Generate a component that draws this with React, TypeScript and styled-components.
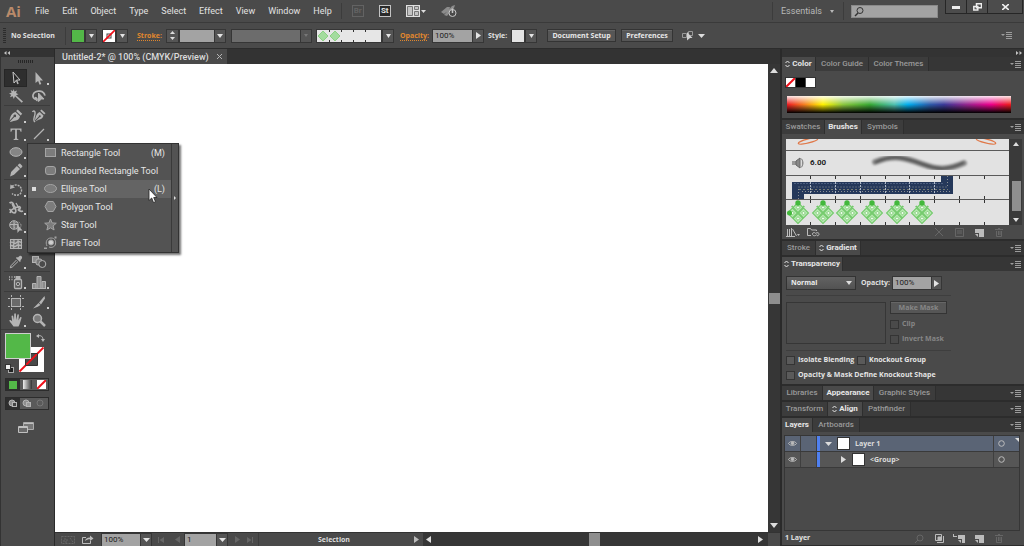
import React from "react";
import styled, { createGlobalStyle, css } from "styled-components";

const GlobalStyle = createGlobalStyle`
  *, *::before, *::after { box-sizing: border-box; }
  body { margin: 0; background: #2f2f2f; }
  body, button, input, select {
    font-family: Roboto, "Open Sans", sans-serif;
    font-size: 8px;
    line-height: 10px;
    color: #dcdcdc;
  }
  button, input, select { margin: 0; padding: 0; border: 0; border-radius: 0; background: none; }
  svg { display: block; flex: none; }
`;

const Shell = styled.div`
  min-height: 100vh;
  display: flex;
  flex-direction: column;
  background: #4a4a4a;
`;

const labelFont = css`
  font-family: "Open Sans", sans-serif;
  font-size: 7px;
  font-weight: 700;
`;

/* ---------- shared controls ---------- */

const Rule = styled.span<{ $h: number; $l?: number; $r?: number }>`
  width: 1px;
  height: ${(p) => p.$h}px;
  margin-left: ${(p) => p.$l ?? 0}px;
  margin-right: ${(p) => p.$r ?? 0}px;
  background: #3c3c3c;
  flex: none;
`;

const Spacer = styled.span`
  flex: 1;
`;

const IconButton = styled.button<{ $w?: number; $dim?: boolean }>`
  width: ${(p) => p.$w ?? 14}px;
  height: 14px;
  display: flex;
  align-items: center;
  justify-content: center;
  flex: none;
  color: ${(p) => (p.$dim ? "#666" : "#bcbcbc")};
`;

const ArrowButton = styled.button<{ $w?: number; $off?: boolean }>`
  width: ${(p) => p.$w ?? 12}px;
  align-self: stretch;
  display: flex;
  align-items: center;
  justify-content: center;
  flex: none;
  background: #555;
  border: 1px solid #363636;
  color: ${(p) => (p.$off ? "#777" : "#e4e4e4")};
`;

const Down = ({ w = 7, h = 4 }: { w?: number; h?: number }) => (
  <svg width={w} height={h} viewBox="0 0 7 4" preserveAspectRatio="none" fill="currentColor">
    <path d="M0 0h7L3.500 4z" />
  </svg>
);
const Right = () => (
  <svg width="5" height="7" viewBox="0 0 5 7" fill="currentColor">
    <path d="M0 0v7l5-3.500z" />
  </svg>
);
const Left = () => (
  <svg width="5" height="7" viewBox="0 0 5 7" fill="currentColor">
    <path d="M5 0v7L0 3.500z" />
  </svg>
);
const Updown = () => (
  <svg width="5" height="8" viewBox="0 0 5 8" fill="none" stroke="currentColor" strokeWidth="1">
    <path d="M.5 3 2.500 1l2 2M.5 5l2 2 2-2" />
  </svg>
);
const PanelMenuIcon = () => (
  <svg width="11" height="7" viewBox="0 0 11 7" fill="#9c9c9c">
    <path d="M0 2h4L2 4zM5 0h6v1H5zM5 2h6v1H5zM5 4h6v1H5zM5 6h6v1H5z" />
  </svg>
);
const NoneMark = ({ w, h }: { w: number; h: number }) => (
  <svg width={w} height={h} viewBox={`0 0 ${w} ${h}`}>
    <rect width={w} height={h} fill="#fff" />
    <path d={`M0 ${h}L${w} 0`} stroke="#f0101a" strokeWidth="2" />
  </svg>
);

/* ---------- menu bar ---------- */

const MenuBar = styled.header`
  height: 23px;
  display: flex;
  align-items: center;
  border-bottom: 1px solid #3a3a3a;
  background: #4a4a4a;
`;

const Logo = styled.span`
  width: 28px;
  padding-left: 6px;
  font: 700 15px/20px "Open Sans", sans-serif;
  color: #b98a6a;
`;

const Menus = styled.nav`
  display: flex;
  gap: 13px;
  margin-left: 7px;
`;

const MenuItem = styled.button`
  font-size: 9px;
  line-height: 14px;
  color: #e2e2e2;
`;

const AppBarIcons = styled.div`
  display: flex;
  align-items: center;
`;

const BoxedIcon = styled.button<{ $dim?: boolean; $l: number }>`
  width: 12px;
  height: 12px;
  margin-left: ${(p) => p.$l}px;
  font-size: 8px;
  font-weight: 700;
  border: 1px solid ${(p) => (p.$dim ? "#636363" : "#c4c4c4")};
  color: ${(p) => (p.$dim ? "#636363" : "#e4e4e4")};
  background: ${(p) => (p.$dim ? "none" : "#2a2a2a")};
`;

const Workspace = styled.button`
  display: flex;
  align-items: center;
  gap: 8px;
  font-size: 9px;
  line-height: 14px;
  color: #b8b8b8;
`;

const SearchBox = styled.label`
  width: 87px;
  height: 13px;
  display: flex;
  align-items: center;
  padding-left: 2px;
  background: #a3a3a3;
  border: 1px solid #8a8a8a;
`;

const SearchInput = styled.input`
  min-width: 0;
  flex: 1;
`;

const WindowButtons = styled.div`
  align-self: flex-start;
  display: flex;
  margin: 0 1px 0 7px;
  border: 1px solid #262626;
  border-top: 0;
`;

const WindowButton = styled.button<{ $w: number }>`
  width: ${(p) => p.$w}px;
  height: 13px;
  display: flex;
  align-items: center;
  justify-content: center;
  background: #4c4c4c;
  & + & { border-left: 1px solid #262626; }
`;

/* ---------- control bar ---------- */

const ControlBar = styled.section`
  height: 26px;
  display: flex;
  align-items: center;
  padding: 0 12px 0 3px;
  border-bottom: 1px solid #2c2c2c;
  background: #4a4a4a;
`;

const Grip = styled.span`
  width: 3px;
  height: 16px;
  background: repeating-linear-gradient(#2c2c2c 0 1px, transparent 1px 2px);
`;

const ControlText = styled.span<{ $w: number; $l?: number }>`
  ${labelFont}
  width: ${(p) => p.$w}px;
  margin-left: ${(p) => p.$l ?? 0}px;
  white-space: nowrap;
  color: #e0e0e0;
  flex: none;
`;

const ControlLink = styled.a<{ $w: number; $l?: number }>`
  ${labelFont}
  width: ${(p) => p.$w}px;
  margin-left: ${(p) => p.$l ?? 0}px;
  white-space: nowrap;
  color: #e0872e;
  text-decoration: underline dotted;
  text-underline-offset: 2px;
  flex: none;
`;

const Combo = styled.span<{ $l?: number }>`
  height: 14px;
  display: flex;
  margin-left: ${(p) => p.$l ?? 0}px;
  flex: none;
`;

const Swatch = styled.span<{ $w?: number; $c: string }>`
  width: ${(p) => p.$w ?? 14}px;
  display: flex;
  background: ${(p) => p.$c};
  border: 1px solid #363636;
`;

const Field = styled.input<{ $w: number; $c?: string }>`
  width: ${(p) => p.$w}px;
  padding: 0 2px;
  background: ${(p) => p.$c ?? "#a3a3a3"};
  border: 1px solid #363636;
  border-right: 0;
  font-size: 8px;
  color: #1c1c1c;
`;

const Stepper = styled.span`
  width: 13px;
  display: grid;
  border: 1px solid #363636;
  background: #555;
`;

const StepButton = styled.button<{ $down?: boolean }>`
  display: flex;
  align-items: center;
  justify-content: center;
  height: 6px;
  & svg { transform: ${(p) => (p.$down ? "none" : "scaleY(-1)")}; }
`;

const PushButton = styled.button<{ $w: number; $l?: number; $off?: boolean }>`
  ${labelFont}
  width: ${(p) => p.$w}px;
  height: 13px;
  margin-left: ${(p) => p.$l ?? 0}px;
  flex: none;
  white-space: nowrap;
  background: #565656;
  border: 1px solid #343434;
  box-shadow: inset 0 1px #666;
  color: ${(p) => (p.$off ? "#868686" : "#e8e8e8")};
`;

/* ---------- work area ---------- */

const Work = styled.main`
  flex: 1;
  display: flex;
  background: #333;
`;

/* tools */

const ToolDock = styled.aside`
  width: 55px;
  flex: none;
  border-right: 1px solid #2a2a2a;
  border-left: 1px solid #333;
  background: #4a4a4a;
`;

const DockHandle = styled.div<{ $end?: boolean }>`
  height: 8px;
  display: flex;
  align-items: center;
  justify-content: ${(p) => (p.$end ? "flex-end" : "flex-start")};
  padding: 0 2px 0 3px;
  background: #333;
`;

const ToolGrip = styled.div`
  width: 16px;
  height: 3px;
  margin: 3px auto 6px 17px;
  background: repeating-linear-gradient(90deg, #262626 0 1px, transparent 1px 2px);
`;

const ToolGroup = styled.div`
  display: grid;
  grid-template-columns: 23px 23px;
  grid-auto-rows: 18px;
  margin: 0 4px 0 3px;
  & + & {
    border-top: 1px solid #3c3c3c;
    padding-top: 1px;
  }
`;

const ToolSlot = styled.div`
  position: relative;
  display: flex;
`;

const ToolButton = styled.button<{ $on?: boolean; $more?: boolean }>`
  flex: 1;
  display: flex;
  align-items: center;
  justify-content: center;
  color: #b4b4b4;
  ${(p) => p.$on && css`background: #2e2e2e; box-shadow: inset 0 0 0 1px #262626;`}
  ${(p) => p.$more && css`
    background: linear-gradient(#ccc, #ccc) right 1px bottom 2px / 2px 2px no-repeat;
  `}
`;

const FillStroke = styled.div`
  padding: 3px 0 0 3px;
  border-top: 1px solid #3c3c3c;
`;

const ModeRow = styled.div<{ $t: number }>`
  display: grid;
  grid-template-columns: repeat(3, 14px);
  height: 13px;
  margin: ${(p) => p.$t}px 0 5px 4px;
  width: 44px;
  border: 1px solid #2c2c2c;
`;

const ModeButton = styled.button<{ $on?: boolean }>`
  display: flex;
  align-items: center;
  justify-content: center;
  color: #b4b4b4;
  background: ${(p) => (p.$on ? "#2e2e2e" : "#5a5a5a")};
`;

const ScreenMode = styled.button`
  display: flex;
  margin: 12px 0 0 17px;
`;

/* flyout */

const Flyout = styled.div`
  position: absolute;
  z-index: 3;
  left: 23px;
  top: 0;
  width: 152px;
  display: flex;
  background: #535353;
  border: 1px solid #333;
  box-shadow: 2px 2px 2px rgba(0, 0, 0, 0.55);
`;

const FlyoutList = styled.div`
  flex: 1;
`;

const FlyoutItem = styled.button<{ $on?: boolean }>`
  width: 100%;
  height: 18px;
  display: grid;
  grid-template-columns: 8px 21px 1fr auto;
  align-items: center;
  padding: 0 6px 1px 4px;
  text-align: left;
  white-space: nowrap;
  font-size: 9px;
  background: ${(p) => (p.$on ? "#646464" : "transparent")};
  color: #e6e6e6;
  & svg { justify-self: center; }
`;

const FlyoutDot = styled.i<{ $on?: boolean }>`
  width: 4px;
  height: 4px;
  background: ${(p) => (p.$on ? "#dcdcdc" : "transparent")};
`;

const TearOff = styled.button`
  width: 7px;
  display: flex;
  align-items: center;
  justify-content: center;
  border-left: 1px solid #3a3a3a;
`;

const Pointer = styled.svg`
  position: absolute;
  left: 120px;
  top: 44px;
`;

/* document */

const Doc = styled.section`
  flex: 1;
  min-width: 0;
  display: flex;
  flex-direction: column;
`;

const DocTabs = styled.div`
  height: 15px;
  display: flex;
  background: #333;
`;

const DocTab = styled.button`
  display: flex;
  align-items: center;
  justify-content: space-between;
  width: 172px;
  padding: 0 5px 0 7px;
  font-size: 9px;
  font-weight: 500;
  white-space: nowrap;
  background: #4a4a4a;
`;

const CanvasRow = styled.div`
  flex: 1;
  display: flex;
`;

const Canvas = styled.div`
  flex: 1;
  background: #fff;
`;

const VScroll = styled.div`
  width: 12px;
  display: flex;
  flex-direction: column;
  align-items: center;
  padding: 4px 0;
  background: #363636;
  color: #dedede;
`;

const Thumb = styled.span<{ $w: number; $h: number }>`
  width: ${(p) => p.$w}px;
  height: ${(p) => p.$h}px;
  background: #8e8e8e;
`;

const Flip = styled.span`
  transform: scaleY(-1);
`;

const StatusBar = styled.footer`
  height: 14px;
  display: flex;
  align-items: stretch;
  background: #4a4a4a;
  border-top: 1px solid #333;
`;

const StatusTools = styled.div`
  width: 368px;
  display: flex;
  align-items: center;
  padding-left: 5px;
  background: #4a4a4a;
`;

const StatusText = styled.span`
  ${labelFont}
  flex: 1;
  text-align: center;
`;

const HScroll = styled.div`
  flex: 1;
  display: flex;
  align-items: center;
  justify-content: space-between;
  padding: 0 5px 0 3px;
  background: #363636;
  color: #dedede;
`;

const Corner = styled.span`
  width: 12px;
  background: #4a4a4a;
`;

/* right dock */

const Dock = styled.aside`
  width: 244px;
  flex: none;
  display: flex;
  flex-direction: column;
  border-left: 2px solid #2a2a2a;
  background: #4a4a4a;
`;

const Panel = styled.section<{ $grow?: boolean }>`
  border-bottom: 2px solid #2c2c2c;
  ${(p) => p.$grow && css`flex: 1; display: flex; flex-direction: column; border-bottom-width: 1px;`}
`;

const Tabs = styled.div`
  height: 14px;
  display: flex;
  background: #363636;
  padding-right: 3px;
`;

const Tab = styled.button<{ $w: number; $on?: boolean }>`
  width: ${(p) => p.$w}px;
  display: flex;
  align-items: center;
  justify-content: center;
  gap: 2px;
  white-space: nowrap;
  font-size: 8px;
  font-weight: ${(p) => (p.$on ? 700 : 500)};
  color: ${(p) => (p.$on ? "#e6e6e6" : "#9a9a9a")};
  background: ${(p) => (p.$on ? "#4a4a4a" : "#3c3c3c")};
  border-right: 1px solid #2e2e2e;
`;

const ColorBody = styled.div`
  height: 47px;
  padding: 6px 13px 0 3px;
`;

const ColorChips = styled.div`
  display: flex;
  height: 11px;
  width: 31px;
  border: 1px solid #333;
  gap: 1px;
`;

const Chip = styled.button<{ $c: string }>`
  flex: 1;
  background: ${(p) => p.$c};
`;

const Spectrum = styled.div`
  height: 17px;
  margin: 8px 0 0 2px;
  background:
    linear-gradient(rgba(255, 255, 255, 0.9), rgba(255, 255, 255, 0) 50%, rgba(0, 0, 0, 0) 50%, #000 100%),
    linear-gradient(90deg, #ec1c24 0%, #f58220 8%, #fff200 16%, #8cc63f 25%, #39a835 37%, #4fc0b0 48%,
      #00adee 54%, #2e5aa8 64%, #3b3a98 70%, #92278f 80%, #ec008c 91%, #ed1c24 99%);
`;

const BrushBody = styled.div`
  height: 105px;
  padding: 5px 2px 0 4px;
`;

const BrushFrame = styled.div`
  display: flex;
  height: 86px;
  background: #3a3a3a;
`;

const BrushList = styled.div`
  flex: 1;
  overflow: hidden;
  background: #e2e2e2;
`;

const BrushRow = styled.div<{ $h: number }>`
  height: ${(p) => p.$h}px;
  display: flex;
  align-items: center;
  border-bottom: 1px solid #5a5a5a;
  color: #222;
  font-weight: 500;
  overflow: hidden;
  &:last-child { border-bottom: 0; }
`;

const BrushSize = styled.span`
  width: 54px;
  margin-left: 5px;
  font-size: 8px;
  font-weight: 700;
`;

const BrushScroll = styled.div`
  width: 12px;
  margin-left: 1px;
  display: flex;
  flex-direction: column;
  align-items: center;
  padding: 3px 0;
  color: #dedede;
`;

const ScrollPad = styled.span`
  height: 7px;
`;

const PanelFooter = styled.div`
  height: 14px;
  display: flex;
  align-items: center;
  gap: 6px;
  padding-right: 16px;
`;

const TransparencyBody = styled.div`
  height: 113px;
  padding: 5px 0 0 4px;
`;

const Line = styled.div<{ $mt?: number }>`
  display: flex;
  align-items: center;
  margin-top: ${(p) => p.$mt ?? 0}px;
`;

const SelectWrap = styled.label`
  position: relative;
  display: flex;
  align-items: center;
`;

const SelectArrow = styled.span`
  position: absolute;
  right: 4px;
  pointer-events: none;
`;

const Select = styled.select`
  ${labelFont}
  appearance: none;
  width: 70px;
  height: 14px;
  padding: 0 4px;
  background: linear-gradient(#626262, #525252);
  border: 1px solid #333;
  color: #ececec;
`;

const MaskArea = styled.div`
  width: 165px;
  display: flex;
  gap: 4px;
  margin-top: 5px;
  padding: 5px 0 6px;
  border-top: 1px solid #3e3e3e;
  border-bottom: 1px solid #3e3e3e;
`;

const MaskPreview = styled.div`
  width: 100px;
  height: 42px;
  margin-top: 1px;
  border: 1px solid #363636;
`;

const MaskActions = styled.div`
  display: flex;
  flex-direction: column;
  gap: 5px;
`;

const Check = styled.label<{ $off?: boolean; $w?: number }>`
  ${labelFont}
  display: flex;
  align-items: center;
  gap: 3px;
  height: 10px;
  width: ${(p) => (p.$w ? p.$w + "px" : "auto")};
  white-space: nowrap;
  color: ${(p) => (p.$off ? "#868686" : "#e4e4e4")};
`;

const CheckBox = styled.input`
  appearance: none;
  width: 9px;
  height: 9px;
  flex: none;
  border: 1px solid #343434;
  background: #5a5a5a;
  &:disabled { background: #4a4a4a; }
`;

const LayerBody = styled.div`
  flex: 1;
  display: flex;
  flex-direction: column;
  padding: 3px 4px 0 2px;
`;

const LayerList = styled.ul`
  flex: 1;
  margin: 0;
  padding: 0;
  list-style: none;
  border: 1px solid #363636;
`;

const LayerRow = styled.li<{ $on?: boolean }>`
  ${labelFont}
  height: 16px;
  display: flex;
  align-items: stretch;
  border-bottom: 1px solid #3a3a3a;
  background: ${(p) => (p.$on ? "#5a6475" : "#565656")};
`;

const LayerCell = styled.button<{ $w: number }>`
  width: ${(p) => p.$w}px;
  display: flex;
  align-items: center;
  justify-content: center;
  border-right: 1px solid #3f3f3f;
  color: #bdbdbd;
`;

const LayerColor = styled.i`
  width: 3px;
  background: #4f80f0;
`;

const LayerMain = styled.span<{ $indent: number }>`
  flex: 1;
  display: flex;
  align-items: center;
  gap: 5px;
  padding-left: ${(p) => p.$indent}px;
  border-right: 1px solid #3f3f3f;
`;

const LayerThumb = styled.i`
  width: 13px;
  height: 13px;
  background: #fff;
  border: 1px solid #333;
`;

const Twist = styled.button`
  width: 8px;
  display: flex;
  justify-content: center;
`;

const LayerTarget = styled.button`
  width: 25px;
  display: flex;
  align-items: center;
  padding-left: 4px;
  color: #bdbdbd;
`;

const LayerFooter = styled(PanelFooter)`
  padding-left: 1px;
  padding-right: 14px;
`;

/* ---------- tool drawings ---------- */

const T = ({ children, fill }: { children: React.ReactNode; fill?: boolean }) => (
  <svg width="16" height="16" viewBox="0 0 16 16" fill={fill ? "currentColor" : "none"} stroke={fill ? "none" : "currentColor"} strokeWidth="1">
    {children}
  </svg>
);

const art: Record<string, React.ReactNode> = {
  Selection: <T><path d="M5 2l7 8H8.500L6 13z" fill="#2a2a2a" stroke="#c8c8c8" /><path d="M8.500 10l1.500 4" strokeWidth="1.500" /></T>,
  "Direct Selection": <T fill><path d="M4.500 2l7.500 8.500H8.800l1.500 3.500-1.700.7-1.500-3.600L4.500 13z" /></T>,
  "Magic Wand": <T fill><path d="M5.500 1l1 2.600L9 2.500 8 5l2.500 1.200L8 7.200l7 6.300-1.300 1.300L7 8.300 5.800 11 4.700 8.300 2 9.300l1.200-2.500L1 5.500l2.600-.8L2.700 2l2.300 1.300z" /></T>,
  Lasso: <T><path d="M5 11.500C2.500 10.500 1.500 8.500 2.200 6.500 3 4.200 6 2.800 9 3.200s5 2.300 4.700 4.500M4 9.500c2 .3 2.500 1.800 1.500 3.500" strokeWidth="1.700" /><path d="M7.500 5l5.500 6h-2.500l-3 2.500z" fill="currentColor" /></T>,
  Pen: <T fill><path d="M9.700 1.500l4.500 4.300-1.500 1.700-4.600-4.400zM7.500 4l4.500 4.200c-.6 3-2.600 4.400-6.500 4.900L2.500 14l-.5-.6L6.400 9a1.300 1.300 0 1 0-.8-.8L1.500 12.700C2.200 8.500 3.500 5.200 7.500 4z" /></T>,
  Curvature: <T><path d="M1.500 4c1-2 3-1 2.500 2s-2.500 6.500 0 8" strokeWidth="1.400" /><path d="M10.500 1.500l4 3.800-1.300 1.300-4-3.800zM8.800 4l3.700 3.500c-.6 2.600-2.300 3.700-5 4.200l-3.500 2 4.500-4.500a1 1 0 1 0-.7-.7L4 12.500C4.500 8.500 5.800 5 8.800 4z" fill="currentColor" stroke="none" /></T>,
  Type: <T fill><path d="M2.500 2.500h11v3.300h-.9c-.3-1.500-.8-2-2.100-2H8.900V12c0 .8.400 1.100 1.500 1.200v.8H5.600v-.8c1.100-.1 1.500-.4 1.500-1.200V3.800H5.500c-1.300 0-1.800.5-2.100 2h-.9z" /></T>,
  Line: <T><path d="M3 13L13 3" strokeWidth="1.300" /></T>,
  Ellipse: <T><ellipse cx="8" cy="8" rx="6" ry="4.300" fill="#858585" stroke="#b4b4b4" /></T>,
  Pencil: <T fill><path d="M12 1.500l2.200 2.200c.4.500.3 1-.2 1.400L12.700 6.400 9.600 3.300 10.900 2c.4-.5.8-.7 1.100-.5zM8.900 4l3.100 3.100-6 5.700-3.900 1.600 1-4.400z" /></T>,
  Rotate: <T><path d="M4 4.500C7 1.500 13.500 3 13.500 8.300S7.500 14.500 4 11.500" strokeDasharray="2 1" strokeWidth="1.400" /><path d="M2 7l.5-4.500L7 5.500z" fill="currentColor" stroke="none" /></T>,
  Width: <T><path d="M1.500 3c2-1.500 3.500-.5 4 1.500s1 3 2.500 3 3-1.500 4-.5-.5 2-1.500 2.500 2 2.500 4.500 1.500M2 13c1-3 2.500-4.500 5-4.500 1.500 2 1 4.500-1 4.500S3 10.500 1.500 9" strokeWidth="1.700" /><path d="M8 3l4 7M4 3.500l2 5" strokeWidth="1.300" /></T>,
  "Shape Builder": <T><circle cx="6" cy="7" r="4.300" fill="#6c6c6c" /><circle cx="9.500" cy="7.500" r="3.500" strokeDasharray="1 1" /><path d="M2 6.500h8M6 3v8" /><path d="M9 6l5.500 6.500h-3L9.500 15z" fill="currentColor" stroke="none" /></T>,
  Mesh: <T><rect x="2.500" y="3.500" width="11" height="9" fill="#6c6c6c" /><path d="M2 7c3-3 4 2 6 0s3-2 6 0M2 10c3-2 4 2 6 0s4-1 6 0M5.500 3c2 3-1.500 7 .5 10M10.500 3c-2 3 1.500 7-.5 10" strokeWidth="1.300" /></T>,
  Eyedropper: <T><path d="M8.500 6l-5.500 5.700-.7 2.100 2-.8L10 7.500" /><path d="M10 3.500c1.500-2 3-2 3.800-1s.2 2.500-1.500 3.800l.6.700-1 1-4-4 1-1z" fill="currentColor" stroke="none" /></T>,
  Blend: <T><rect x="1.500" y="2.500" width="6" height="6" fill="#8c8c8c" /><rect x="5" y="5" width="6" height="6" rx="2" fill="#777" /><circle cx="11.300" cy="10" r="3.500" fill="#4a4a4a" /></T>,
  "Symbol Sprayer": <T><rect x="6.500" y="5.500" width="7" height="9" rx="1" fill="#5a5a5a" strokeWidth="1.300" /><rect x="8" y="2.500" width="4" height="2" fill="currentColor" /><circle cx="10" cy="10" r="1.700" /><path d="M1 3h1M3.500 3h1M1 5.500h1M3.500 5.500h1M6 3h1" strokeWidth="1.300" /></T>,
  Graph: <T><path d="M1.500 14.500v-5h3.500v5M6 14.500v-12h4v12M11 14.500v-7h3.500v7z" fill="#8c8c8c" /><path d="M1 14.500h14" /></T>,
  Artboard: <T><rect x="3.500" y="4.500" width="9" height="8" fill="#6a6a6a" /><path d="M3.500 1v2M12.500 1v2M3.500 14v2M12.500 14v2M0 4.500h2M14 4.500h2M0 12.500h2M14 12.500h2" /></T>,
  Slice: <T fill><path d="M13.500 2L8 8.500l2 2 4-6zM7.500 9l2 2-2.700 1.700L2 14.500z" /></T>,
  Hand: <T fill><path d="M5.500 14.500C4.500 12.500 1.500 10 1.300 8.500c.7-.9 1.800-.2 2.900 1L3.500 4c.5-1 1.500-.6 1.700.2L6 8l.2-6c.4-1 1.500-.9 1.700 0L8.200 8l1.200-5.300c.6-.8 1.500-.5 1.500.4L10.500 8.500l1.700-3.300c.7-.6 1.500-.1 1.300.8L12 11c-.5 1.700-1 2.500-1.500 3.500z" /></T>,
  Zoom: <T><circle cx="6.500" cy="6.500" r="4" fill="#7c7c7c" strokeWidth="1.500" /><path d="M9.500 9.500l4.500 4.500" strokeWidth="2.500" /></T>,
};

const toolGroups: [string, string | null][][] = [
  [["Selection", "Direct Selection"], ["Magic Wand", "Lasso"]],
  [["Pen", "Curvature"], ["Type", "Line"], ["Ellipse", null], ["Pencil", null]],
  [["Rotate", null], ["Width", null], ["Shape Builder", null], ["Mesh", null], ["Eyedropper", "Blend"]],
  [["Symbol Sprayer", "Graph"]],
  [["Artboard", "Slice"], ["Hand", "Zoom"]],
];

const noFlyout = ["Selection", "Magic Wand", "Lasso", "Mesh", "Blend", "Artboard", "Zoom", "Curvature"];

const shapeArt = {
  fill: "#7c7c7c",
  stroke: "#a4a4a4",
};

const shapes: { name: string; key?: string; on?: boolean; icon: React.ReactNode }[] = [
  { name: "Rectangle Tool", key: "(M)", icon: <rect x="1.500" y="2.500" width="10" height="8" {...shapeArt} /> },
  { name: "Rounded Rectangle Tool", icon: <rect x="1.500" y="2.500" width="10" height="8" rx="2.500" {...shapeArt} /> },
  { name: "Ellipse Tool", key: "(L)", on: true, icon: <ellipse cx="6.500" cy="6.500" rx="6" ry="4" {...shapeArt} /> },
  { name: "Polygon Tool", icon: <path d="M3.800 1.500h5.400l2.800 5-2.800 5H3.800L1 6.500z" {...shapeArt} /> },
  { name: "Star Tool", icon: <path d="M6.500 1l1.600 3.900 4.200.3-3.200 2.700 1 4.100-3.600-2.200L2.900 12l1-4.100L.7 5.200l4.200-.3z" {...shapeArt} /> },
  {
    name: "Flare Tool",
    icon: (
      <g fill="none" stroke="#a4a4a4">
        <path d="M0 12.500h3M10.500 1.500h2" strokeWidth="2" />
        <path d="M3 10C1 6 3 2 7 2s5 3 4.500 6-4 4-6.500 3" />
        <circle cx="7" cy="6.500" r="2.500" fill="#d0d0d0" />
      </g>
    ),
  },
];

function ShapeFlyout() {
  return (
    <Flyout role="menu">
      <FlyoutList>
        {shapes.map((s) => (
          <FlyoutItem key={s.name} role="menuitem" $on={s.on}>
            <FlyoutDot $on={s.on} />
            <svg width="13" height="13" viewBox="0 0 13 13">{s.icon}</svg>
            <span>{s.name}</span>
            <span>{s.key}</span>
          </FlyoutItem>
        ))}
      </FlyoutList>
      <TearOff aria-label="Tear off">
        <svg width="2" height="4" viewBox="0 0 2 4"><path d="M0 0v4l2-2z" fill="#ddd" /></svg>
      </TearOff>
      <Pointer width="10" height="16" viewBox="0 0 10 16">
        <path d="M1 1v11.500l2.700-2.500L5.500 14.500l2-.8L5.700 9.500H9z" fill="#fff" stroke="#222" strokeWidth=".8" />
      </Pointer>
    </Flyout>
  );
}

function Tools() {
  return (
    <ToolDock>
      <DockHandle>
        <svg width="6" height="4" viewBox="0 0 6 4" fill="#c4c4c4"><path d="M2.500 0v4L0 2zM6 0v4L3.500 2z" /></svg>
      </DockHandle>
      <ToolGrip />
      {toolGroups.map((g, i) => (
        <ToolGroup key={i}>
          {g.flat().map((name, j) => (
            <ToolSlot key={j}>
              {name && (
                <ToolButton aria-label={name} $on={name === "Selection"} $more={!noFlyout.includes(name)}>
                  {art[name]}
                </ToolButton>
              )}
              {name === "Ellipse" && <ShapeFlyout />}
            </ToolSlot>
          ))}
        </ToolGroup>
      ))}
      <FillStroke>
        <svg width="44" height="42" viewBox="0 0 44 42">
          <g fill="none" stroke="#b8b8b8">
            <path d="M34 3c3-1 5 .5 5 4" />
            <path d="M35 1l-3 2 3 2zM37 6l2 3 2-3z" fill="#b8b8b8" stroke="none" />
          </g>
          <path d="M15 14h25v25H15zM21.500 20.500v12h12v-12z" fill="#fff" fillRule="evenodd" />
          <path d="M15.500 38.500L39.500 14.500" stroke="#f0101a" strokeWidth="1.800" />
          <path d="M21.500 20.500h12v12h-12z" fill="none" stroke="#333" />
          <rect x="1.500" y=".5" width="25" height="25" fill="#53b848" stroke="#cfcfcf" />
          <rect x="4.500" y="34.500" width="5" height="5" fill="#222" stroke="#aaa" />
          <rect x="1.500" y="31.500" width="5" height="5" fill="#eee" stroke="#333" />
        </svg>
      </FillStroke>
      <ModeRow $t={3}>
        <ModeButton $on aria-label="Color"><svg width="8" height="8"><rect width="8" height="8" fill="#53b848" /></svg></ModeButton>
        <ModeButton aria-label="Gradient">
          <svg width="9" height="9">
            <defs><linearGradient id="gm"><stop stopColor="#eee" /><stop offset="1" stopColor="#333" /></linearGradient></defs>
            <rect width="9" height="9" fill="url(#gm)" />
          </svg>
        </ModeButton>
        <ModeButton aria-label="None"><NoneMark w={9} h={9} /></ModeButton>
      </ModeRow>
      <ModeRow $t={6}>
        {[0, 1, 2].map((i) => (
          <ModeButton key={i} $on={i === 0} aria-label={["Draw Normal", "Draw Behind", "Draw Inside"][i]}>
            <svg width="10" height="9" viewBox="0 0 10 9" fill={i === 2 ? "none" : "#8e8e8e"} stroke={i === 2 ? "#777" : "#b4b4b4"}>
              <circle cx="4" cy="4" r="3" />
              {i < 2 && <rect x="4.500" y="3.500" width="4" height="4" fill={i ? "#999" : "#444"} />}
            </svg>
          </ModeButton>
        ))}
      </ModeRow>
      <ScreenMode aria-label="Screen Mode">
        <svg width="17" height="13" viewBox="0 0 17 13">
          <path d="M5.500 .5h10v7h-10z" fill="#777" stroke="#aaa" />
          <path d="M.5 4.500h9v6h-9z" fill="#6a6a6a" stroke="#c0c0c0" />
          <path d="M1 5.500h8M6 1.500h9" stroke="#c0c0c0" />
        </svg>
      </ScreenMode>
    </ToolDock>
  );
}

/* ---------- document ---------- */

function DocumentArea() {
  return (
    <Doc>
      <DocTabs>
        <DocTab>
          <span>Untitled-2* @ 100% (CMYK/Preview)</span>
          <svg width="5" height="5" viewBox="0 0 5 5"><path d="M0 0l5 5M5 0L0 5" stroke="#b4b4b4" /></svg>
        </DocTab>
      </DocTabs>
      <CanvasRow>
        <Canvas />
        <VScroll>
          <Flip><Down w={8} h={5} /></Flip>
          <Spacer />
          <Thumb $w={11} $h={11} />
          <Spacer />
          <Down w={8} h={5} />
        </VScroll>
      </CanvasRow>
      <StatusBar>
        <StatusTools>
          <IconButton $dim $w={16} aria-label="Touch">
            <svg width="14" height="8" viewBox="0 0 14 8" fill="none" stroke="currentColor"><path d="M.5.5h13v7H.5zM3 3h3v3H3zM9 2l3 4" strokeDasharray="2 1" /></svg>
          </IconButton>
          <IconButton $w={24} aria-label="Share">
            <svg width="12" height="9" viewBox="0 0 12 9" fill="none" stroke="currentColor">
              <path d="M4 2.500H.5v6h8V6" /><path d="M3 6c.5-2 2-3.500 5-3.500V.5L11.500 3.500 8 6V4.300C6 4.300 4.500 4.800 3 6z" fill="currentColor" stroke="none" />
            </svg>
          </IconButton>
          <Combo $l={1}>
            <Field $w={39} defaultValue="100%" aria-label="Zoom level" />
            <ArrowButton aria-label="Zoom presets"><Down /></ArrowButton>
          </Combo>
          <IconButton $dim $w={18} aria-label="First"><svg width="6" height="6" viewBox="0 0 6 6" fill="currentColor"><path d="M0 0h1v6H0zM6 0v6L1.500 3z" /></svg></IconButton>
          <IconButton $dim $w={14} aria-label="Previous"><Left /></IconButton>
          <Combo>
            <Field $w={32} defaultValue="1" aria-label="Artboard" />
            <ArrowButton aria-label="Artboards"><Down /></ArrowButton>
          </Combo>
          <IconButton $dim $w={18} aria-label="Next"><Right /></IconButton>
          <IconButton $dim $w={8} aria-label="Last"><svg width="6" height="6" viewBox="0 0 6 6" fill="currentColor"><path d="M5 0h1v6H5zM0 0v6l4.500-3z" /></svg></IconButton>
          <Rule $h={14} $l={4} />
          <StatusText>Selection</StatusText>
          <IconButton $w={14} aria-label="Status options"><Right /></IconButton>
        </StatusTools>
        <HScroll>
          <Left />
          <Thumb $w={11} $h={13} />
          <Right />
        </HScroll>
        <Corner />
      </StatusBar>
    </Doc>
  );
}

/* ---------- panels ---------- */

type TabDef = { name: string; w: number; on?: boolean; arrows?: boolean };

function PanelTabs({ tabs }: { tabs: TabDef[] }) {
  return (
    <Tabs role="tablist">
      {tabs.map((t) => (
        <Tab key={t.name} role="tab" $w={t.w} $on={t.on}>
          {t.arrows && <Updown />}
          {t.name}
        </Tab>
      ))}
      <Spacer />
      <IconButton $w={11} aria-label="Panel menu"><PanelMenuIcon /></IconButton>
    </Tabs>
  );
}

const cells = [24, 49, 74, 99, 123, 148, 173, 198];

const Ticks = ({ y = 0 }: { y?: number }) => (
  <g stroke="#333">
    {cells.map((x) => <path key={x} d={`M${x + 0.5} ${y}v3`} />)}
  </g>
);

const Diamond = ({ x, corner }: { x: number; corner?: boolean }) => (
  <g transform={`translate(${x} 13)`}>
    {[[0, -5.500], [-5.500, 0], [5.500, 0], [0, 5.500]].map(([a, b]) => (
      <g key={`${a},${b}`} transform={`translate(${a} ${b}) rotate(45)`}>
        <rect x="-3.500" y="-3.500" width="7" height="7" fill="#b4e6ae" stroke="#6cc864" strokeWidth="1" />
        <rect x="-1.300" y="-1.300" width="2.600" height="2.600" fill="#f0faee" stroke="#6cc864" strokeWidth=".7" />
      </g>
    ))}
    <circle cy="-10" r="2.700" fill="#43b83c" />
    <path d="M-5-7l-1.500 1M5-7l1.500 1" stroke="#6cc864" strokeWidth="1.500" />
    {corner && <circle cx="-8.500" cy="0" r="2.500" fill="#43b83c" />}
  </g>
);

const NewIcon = () => (
  <svg width="9" height="9" viewBox="0 0 9 9" fill="currentColor"><path d="M0 1h9v8H4V5H0zM0 6h3v3z" /></svg>
);
const TrashIcon = () => (
  <svg width="8" height="9" viewBox="0 0 8 9" fill="none" stroke="currentColor"><path d="M0 1.500h8M3 .5h2M1.500 3v5.500h5V3M3.500 3v4M5 3v4" /></svg>
);

function BrushesPanel() {
  return (
    <BrushBody>
      <BrushFrame>
        <BrushList>
          <BrushRow $h={12}>
            <svg width="223" height="11" viewBox="0 0 223 11" fill="none" stroke="#e07848" strokeWidth="1.300">
              <ellipse cx="22" cy="2" rx="10" ry="2" transform="rotate(-14 22 2)" />
              <ellipse cx="200" cy="2" rx="10" ry="2" transform="rotate(14 200 2)" />
            </svg>
          </BrushRow>
          <BrushRow $h={25}>
            <svg width="19" height="12" viewBox="0 0 19 12">
              <path d="M6 4h4v4H6z" fill="#999" />
              <path d="M10 4l4-3v10l-4-3z" fill="#888" stroke="#666" />
              <path d="M15 1.500c2.500 2 2.500 7 0 9" fill="#ddd" stroke="#666" />
            </svg>
            <BrushSize>6.00</BrushSize>
            <svg width="110" height="24" viewBox="0 0 110 24" fill="none" strokeLinecap="round">
              <defs><filter id="soft"><feGaussianBlur stdDeviation="1" /></filter></defs>
              <g filter="url(#soft)">
                <path d="M11 11C30 3 42 7 58 13s26 6 42-1" stroke="#8c8c8c" strokeWidth="6" />
                <path d="M12 11C30 3 42 7 58 13s26 6 41-1" stroke="#585858" strokeWidth="3" />
              </g>
            </svg>
          </BrushRow>
          <BrushRow $h={24}>
            <svg width="223" height="23" viewBox="0 0 223 23">
              <path d="M6 6h149V0h12v18H18v5H6z" fill="#25385a" />
              <path d="M8 7.500h149" fill="none" stroke="#4c5f80" strokeDasharray="2 1" />
              <path d="M12.500 23v-12h149V0M16 15.500h149" fill="none" stroke="#8a8f94" strokeDasharray="1 2" />
              <path d="M13 13.500h149" stroke="#777b74" strokeDasharray="2 2" />
              <path d="M24.500 6v12M49.500 6v12M74.500 6v12M99.500 6v12M123.500 6v12M148.500 6v12" stroke="#aeb9c8" strokeDasharray="2 1" />
              <Ticks />
              <Ticks y={20} />
            </svg>
          </BrushRow>
          <BrushRow $h={25}>
            <svg width="223" height="25" viewBox="0 0 223 25">
              <Ticks />
              <Ticks y={22} />
              {[12, 37, 61, 86, 111, 136].map((x, i) => <Diamond key={x} x={x} corner={i === 0} />)}
            </svg>
          </BrushRow>
        </BrushList>
        <BrushScroll>
          <Flip><Down w={6} h={4} /></Flip>
          <Spacer />
          <Thumb $w={9} $h={30} />
          <ScrollPad />
          <Down w={6} h={4} />
        </BrushScroll>
      </BrushFrame>
      <PanelFooter>
        <IconButton aria-label="Brush libraries">
          <svg width="14" height="9" viewBox="0 0 14 9" fill="none" stroke="currentColor"><path d="M1.500 1v7M3.500 1v7M5.500 0v8M6.500 1l4 7M0 8.500h9" /><path d="M11 6h3l-1.500 2z" fill="currentColor" stroke="none" /></svg>
        </IconButton>
        <IconButton aria-label="Libraries panel">
          <svg width="13" height="9" viewBox="0 0 13 9" fill="none" stroke="currentColor"><path d="M4 7.500H.5v-7h3l1 1.500h5v1M5.500 6c0-1.500 2-2 3-.7C10.500 4 12.500 5 12 6.500s-2 1.500-2.500.5M5.500 6c0 2 3 2.500 4 .5" /></svg>
        </IconButton>
        <Spacer />
        <IconButton $dim aria-label="Remove stroke"><svg width="8" height="8" viewBox="0 0 8 8"><path d="M0 0l8 8M8 0L0 8" stroke="currentColor" /></svg></IconButton>
        <IconButton $dim aria-label="Options"><svg width="9" height="9" viewBox="0 0 9 9"><path d="M.5.5h8v8h-8zM2 3h5M2 5h5" fill="none" stroke="currentColor" /></svg></IconButton>
        <IconButton aria-label="New brush"><NewIcon /></IconButton>
        <IconButton $dim aria-label="Delete brush"><TrashIcon /></IconButton>
      </PanelFooter>
    </BrushBody>
  );
}

function TransparencyPanel() {
  return (
    <TransparencyBody>
      <Line>
        <SelectWrap>
          <Select aria-label="Blend mode" defaultValue="Normal"><option>Normal</option></Select>
          <SelectArrow><Down w={6} /></SelectArrow>
        </SelectWrap>
        <ControlText $w={31} $l={5}>Opacity:</ControlText>
        <Combo>
          <Field $w={39} defaultValue="100%" aria-label="Opacity" />
          <ArrowButton $w={11} aria-label="Opacity slider"><Right /></ArrowButton>
        </Combo>
      </Line>
      <MaskArea>
        <MaskPreview />
        <MaskActions>
          <PushButton $w={57} $off>Make Mask</PushButton>
          <Check $off><CheckBox type="checkbox" disabled />Clip</Check>
          <Check $off><CheckBox type="checkbox" disabled />Invert Mask</Check>
        </MaskActions>
      </MaskArea>
      <Line $mt={4}>
        <Check $w={71}><CheckBox type="checkbox" />Isolate Blending</Check>
        <Check><CheckBox type="checkbox" />Knockout Group</Check>
      </Line>
      <Line $mt={5}>
        <Check><CheckBox type="checkbox" />Opacity &amp; Mask Define Knockout Shape</Check>
      </Line>
    </TransparencyBody>
  );
}

const Eye = () => (
  <svg width="9" height="7" viewBox="0 0 9 7" fill="none" stroke="currentColor">
    <path d="M.5 3.500C2 .8 7 .8 8.500 3.500 7 6 2 6 .5 3.500z" />
    <circle cx="4.500" cy="3.300" r="1.300" fill="currentColor" />
  </svg>
);

function LayersPanel() {
  return (
    <LayerBody>
      <LayerList>
        {["Layer 1", "<Group>"].map((name, i) => (
          <LayerRow key={name} $on={i === 0}>
            <LayerCell $w={16} aria-label="Visibility"><Eye /></LayerCell>
            <LayerCell $w={16} aria-label="Lock" />
            <LayerColor />
            <LayerMain $indent={i ? 19 : 4}>
              <Twist aria-label="Expand">{i ? <Right /> : <Down />}</Twist>
              <LayerThumb />
              <span>{name}</span>
            </LayerMain>
            <LayerTarget aria-label="Target">
              <svg width="7" height="7" viewBox="0 0 7 7"><circle cx="3.500" cy="3.500" r="2.800" fill="none" stroke="currentColor" /></svg>
              <Spacer />
              {i === 0 && <svg width="4" height="12" viewBox="0 0 4 12"><path d="M0 0h4v4z" fill="#ddd" /></svg>}
            </LayerTarget>
          </LayerRow>
        ))}
      </LayerList>
      <LayerFooter>
        <ControlText $w={60}>1 Layer</ControlText>
        <Spacer />
        <IconButton $dim aria-label="Locate object"><svg width="9" height="9" viewBox="0 0 9 9" fill="none" stroke="currentColor"><circle cx="5" cy="4" r="3" /><path d="M3 6L0 9" /></svg></IconButton>
        <IconButton aria-label="Clipping mask"><svg width="9" height="9" viewBox="0 0 9 9" fill="none" stroke="currentColor"><path d="M.5.5h6v6h-6z" /><path d="M3 3h3v3H3z" fill="currentColor" /><path d="M8.500 2v6.500H2" /></svg></IconButton>
        <IconButton aria-label="New sublayer"><svg width="12" height="9" viewBox="0 0 12 9" fill="currentColor"><path d="M0 0h1v2h3v1H0zM5 1h7v8H9V5H5zM5 6h3v3z" /></svg></IconButton>
        <IconButton aria-label="New layer"><NewIcon /></IconButton>
        <IconButton $dim aria-label="Delete layer"><TrashIcon /></IconButton>
      </LayerFooter>
    </LayerBody>
  );
}

function PanelDock() {
  return (
    <Dock>
      <DockHandle $end>
        <svg width="6" height="4" viewBox="0 0 6 4" fill="#c4c4c4"><path d="M0 0v4l2.500-2zM3.500 0v4L6 2z" /></svg>
      </DockHandle>
      <Panel>
        <PanelTabs tabs={[{ name: "Color", w: 34, on: true, arrows: true }, { name: "Color Guide", w: 53 }, { name: "Color Themes", w: 60 }]} />
        <ColorBody>
          <ColorChips>
            <Chip $c="#fff" aria-label="None"><NoneMark w={9} h={9} /></Chip>
            <Chip $c="#000" aria-label="Black" />
            <Chip $c="#fff" aria-label="White" />
          </ColorChips>
          <Spectrum />
        </ColorBody>
      </Panel>
      <Panel>
        <PanelTabs tabs={[{ name: "Swatches", w: 43 }, { name: "Brushes", w: 37, on: true }, { name: "Symbols", w: 42 }]} />
        <BrushesPanel />
      </Panel>
      <Panel>
        <PanelTabs tabs={[{ name: "Stroke", w: 34 }, { name: "Gradient", w: 45, on: true, arrows: true }]} />
      </Panel>
      <Panel>
        <PanelTabs tabs={[{ name: "Transparency", w: 61, on: true, arrows: true }]} />
        <TransparencyPanel />
      </Panel>
      <Panel>
        <PanelTabs tabs={[{ name: "Libraries", w: 41 }, { name: "Appearance", w: 51, on: true }, { name: "Graphic Styles", w: 62 }]} />
      </Panel>
      <Panel>
        <PanelTabs tabs={[{ name: "Transform", w: 46 }, { name: "Align", w: 35, on: true, arrows: true }, { name: "Pathfinder", w: 48 }]} />
      </Panel>
      <Panel $grow>
        <PanelTabs tabs={[{ name: "Layers", w: 31, on: true }, { name: "Artboards", w: 47 }]} />
        <LayersPanel />
      </Panel>
    </Dock>
  );
}

/* ---------- top bars ---------- */

function TopMenu() {
  return (
    <MenuBar>
      <Logo>Ai</Logo>
      <Menus>
        {["File", "Edit", "Object", "Type", "Select", "Effect", "View", "Window", "Help"].map((m) => (
          <MenuItem key={m}>{m}</MenuItem>
        ))}
      </Menus>
      <Rule $h={16} $l={9} />
      <AppBarIcons>
        <BoxedIcon $dim $l={10}>Br</BoxedIcon>
        <BoxedIcon $l={15}>St</BoxedIcon>
        <IconButton $w={50} aria-label="Arrange documents">
          <svg width="20" height="12" viewBox="0 0 20 12">
            <path d="M0 0h14v12H0z" fill="#e0e0e0" /><path d="M1.500 1.500h5v9h-5zM8.500 1.500h4v3h-4zM8.500 6.500h4v4h-4z" fill="#c4c4c4" stroke="#777" />
            <path d="M15 5h5l-2.500 3z" fill="#ddd" />
          </svg>
        </IconButton>
        <IconButton $w={16} aria-label="GPU performance">
          <svg width="16" height="14" viewBox="0 0 16 14">
            <path d="M0 8l6-5h3l-1 3-5 4zM3 11l8-9 3-1-1 3-7 8z" fill="#8c8c8c" />
            <circle cx="11.500" cy="9" r="3.500" fill="#4a4a4a" stroke="#c8c8c8" /><path d="M11.500 4.500v4.500" stroke="#c8c8c8" strokeWidth="1.500" />
          </svg>
        </IconButton>
      </AppBarIcons>
      <Spacer />
      <Rule $h={18} $r={8} />
      <Workspace>Essentials <Down w={4} h={3} /></Workspace>
      <Rule $h={18} $l={9} $r={7} />
      <SearchBox>
        <svg width="11" height="11" viewBox="0 0 11 11" fill="none" stroke="#333"><circle cx="6" cy="4.500" r="3" /><path d="M4 7L1 10" strokeWidth="1.500" /></svg>
        <SearchInput aria-label="Search" />
      </SearchBox>
      <WindowButtons>
        <WindowButton $w={20} aria-label="Minimize"><svg width="8" height="7"><rect y="3" width="8" height="3" fill="#eee" /></svg></WindowButton>
        <WindowButton $w={21} aria-label="Restore">
          <svg width="9" height="8" viewBox="0 0 9 8" fill="#4c4c4c" stroke="#eee" strokeWidth="1.500"><path d="M3.500.8h5v4h-5zM.8 3.500h4v3.500h-4z" /></svg>
        </WindowButton>
        <WindowButton $w={35} aria-label="Close"><svg width="7" height="6" viewBox="0 0 7 6"><path d="M0 0l7 6M7 0L0 6" stroke="#eee" strokeWidth="1.700" /></svg></WindowButton>
      </WindowButtons>
    </MenuBar>
  );
}

function Controls() {
  return (
    <ControlBar>
      <Grip />
      <ControlText $w={54} $l={5}>No Selection</ControlText>
      <Rule $h={18} $r={5} />
      <Combo>
        <Swatch $c="#53b848" />
        <ArrowButton aria-label="Fill color"><Down w={5} /></ArrowButton>
      </Combo>
      <Combo $l={5}>
        <Swatch $c="#fff">
          <svg width="12" height="12" viewBox="0 0 12 12"><rect x="4" y="4" width="4" height="4" fill="none" stroke="#444" /><path d="M0 12L12 0" stroke="#f0101a" strokeWidth="1.700" /></svg>
        </Swatch>
        <ArrowButton aria-label="Stroke color"><Down w={5} /></ArrowButton>
      </Combo>
      <ControlLink href="#stroke" $w={29} $l={9}>Stroke:</ControlLink>
      <Combo>
        <Stepper>
          <StepButton aria-label="Increase"><Down w={5} h={3} /></StepButton>
          <StepButton $down aria-label="Decrease"><Down w={5} h={3} /></StepButton>
        </Stepper>
        <Field $w={35} aria-label="Stroke weight" />
        <ArrowButton aria-label="Weights"><Down w={6} /></ArrowButton>
      </Combo>
      <Combo $l={5}>
        <Field $w={69} $c="#6c6c6c" disabled aria-label="Width profile" />
        <ArrowButton $off aria-label="Width profiles"><Down w={4} h={3} /></ArrowButton>
      </Combo>
      <Combo $l={4}>
        <Swatch $w={66} $c="#e6e6e6">
          <svg width="64" height="12" viewBox="0 0 64 12">
            {[6, 18].map((x) => (
              <path key={x} d={`M${x} 1l5 5-5 5-5-5z`} fill="#a4dc9e" stroke="#8cd084" />
            ))}
            <path d="M12.500 0v2M24.500 0v2M36.500 0v2M48.500 0v2M12.500 10v2M24.500 10v2M36.500 10v2M48.500 10v2" stroke="#333" />
          </svg>
        </Swatch>
        <ArrowButton aria-label="Brush definition"><Down w={5} /></ArrowButton>
      </Combo>
      <ControlLink href="#opacity" $w={32} $l={6}>Opacity:</ControlLink>
      <Combo>
        <Field $w={40} defaultValue="100%" aria-label="Opacity" />
        <ArrowButton aria-label="Opacity slider"><Right /></ArrowButton>
      </Combo>
      <ControlText $w={23} $l={4}>Style:</ControlText>
      <Combo>
        <Swatch $c="#e4e4e4" />
        <ArrowButton aria-label="Graphic styles"><Down w={5} /></ArrowButton>
      </Combo>
      <PushButton $w={69} $l={10}>Document Setup</PushButton>
      <PushButton $w={52} $l={5}>Preferences</PushButton>
      <IconButton $w={42} aria-label="Select similar">
        <svg width="24" height="10" viewBox="0 0 24 10" fill="none" stroke="#999"><path d="M.5 2.500h4v4h-4zM6.500.500h4v4h-4z" /><path d="M5 1l5.500 6H8L5 9.500z" fill="#d0d0d0" stroke="none" /><path d="M16 3h7l-3.500 4z" fill="#ddd" stroke="none" /></svg>
      </IconButton>
      <Spacer />
      <IconButton $w={11} aria-label="Control menu"><PanelMenuIcon /></IconButton>
    </ControlBar>
  );
}

export default function App() {
  return (
    <Shell>
      <GlobalStyle />
      <TopMenu />
      <Controls />
      <Work>
        <Tools />
        <DocumentArea />
        <PanelDock />
      </Work>
    </Shell>
  );
}
